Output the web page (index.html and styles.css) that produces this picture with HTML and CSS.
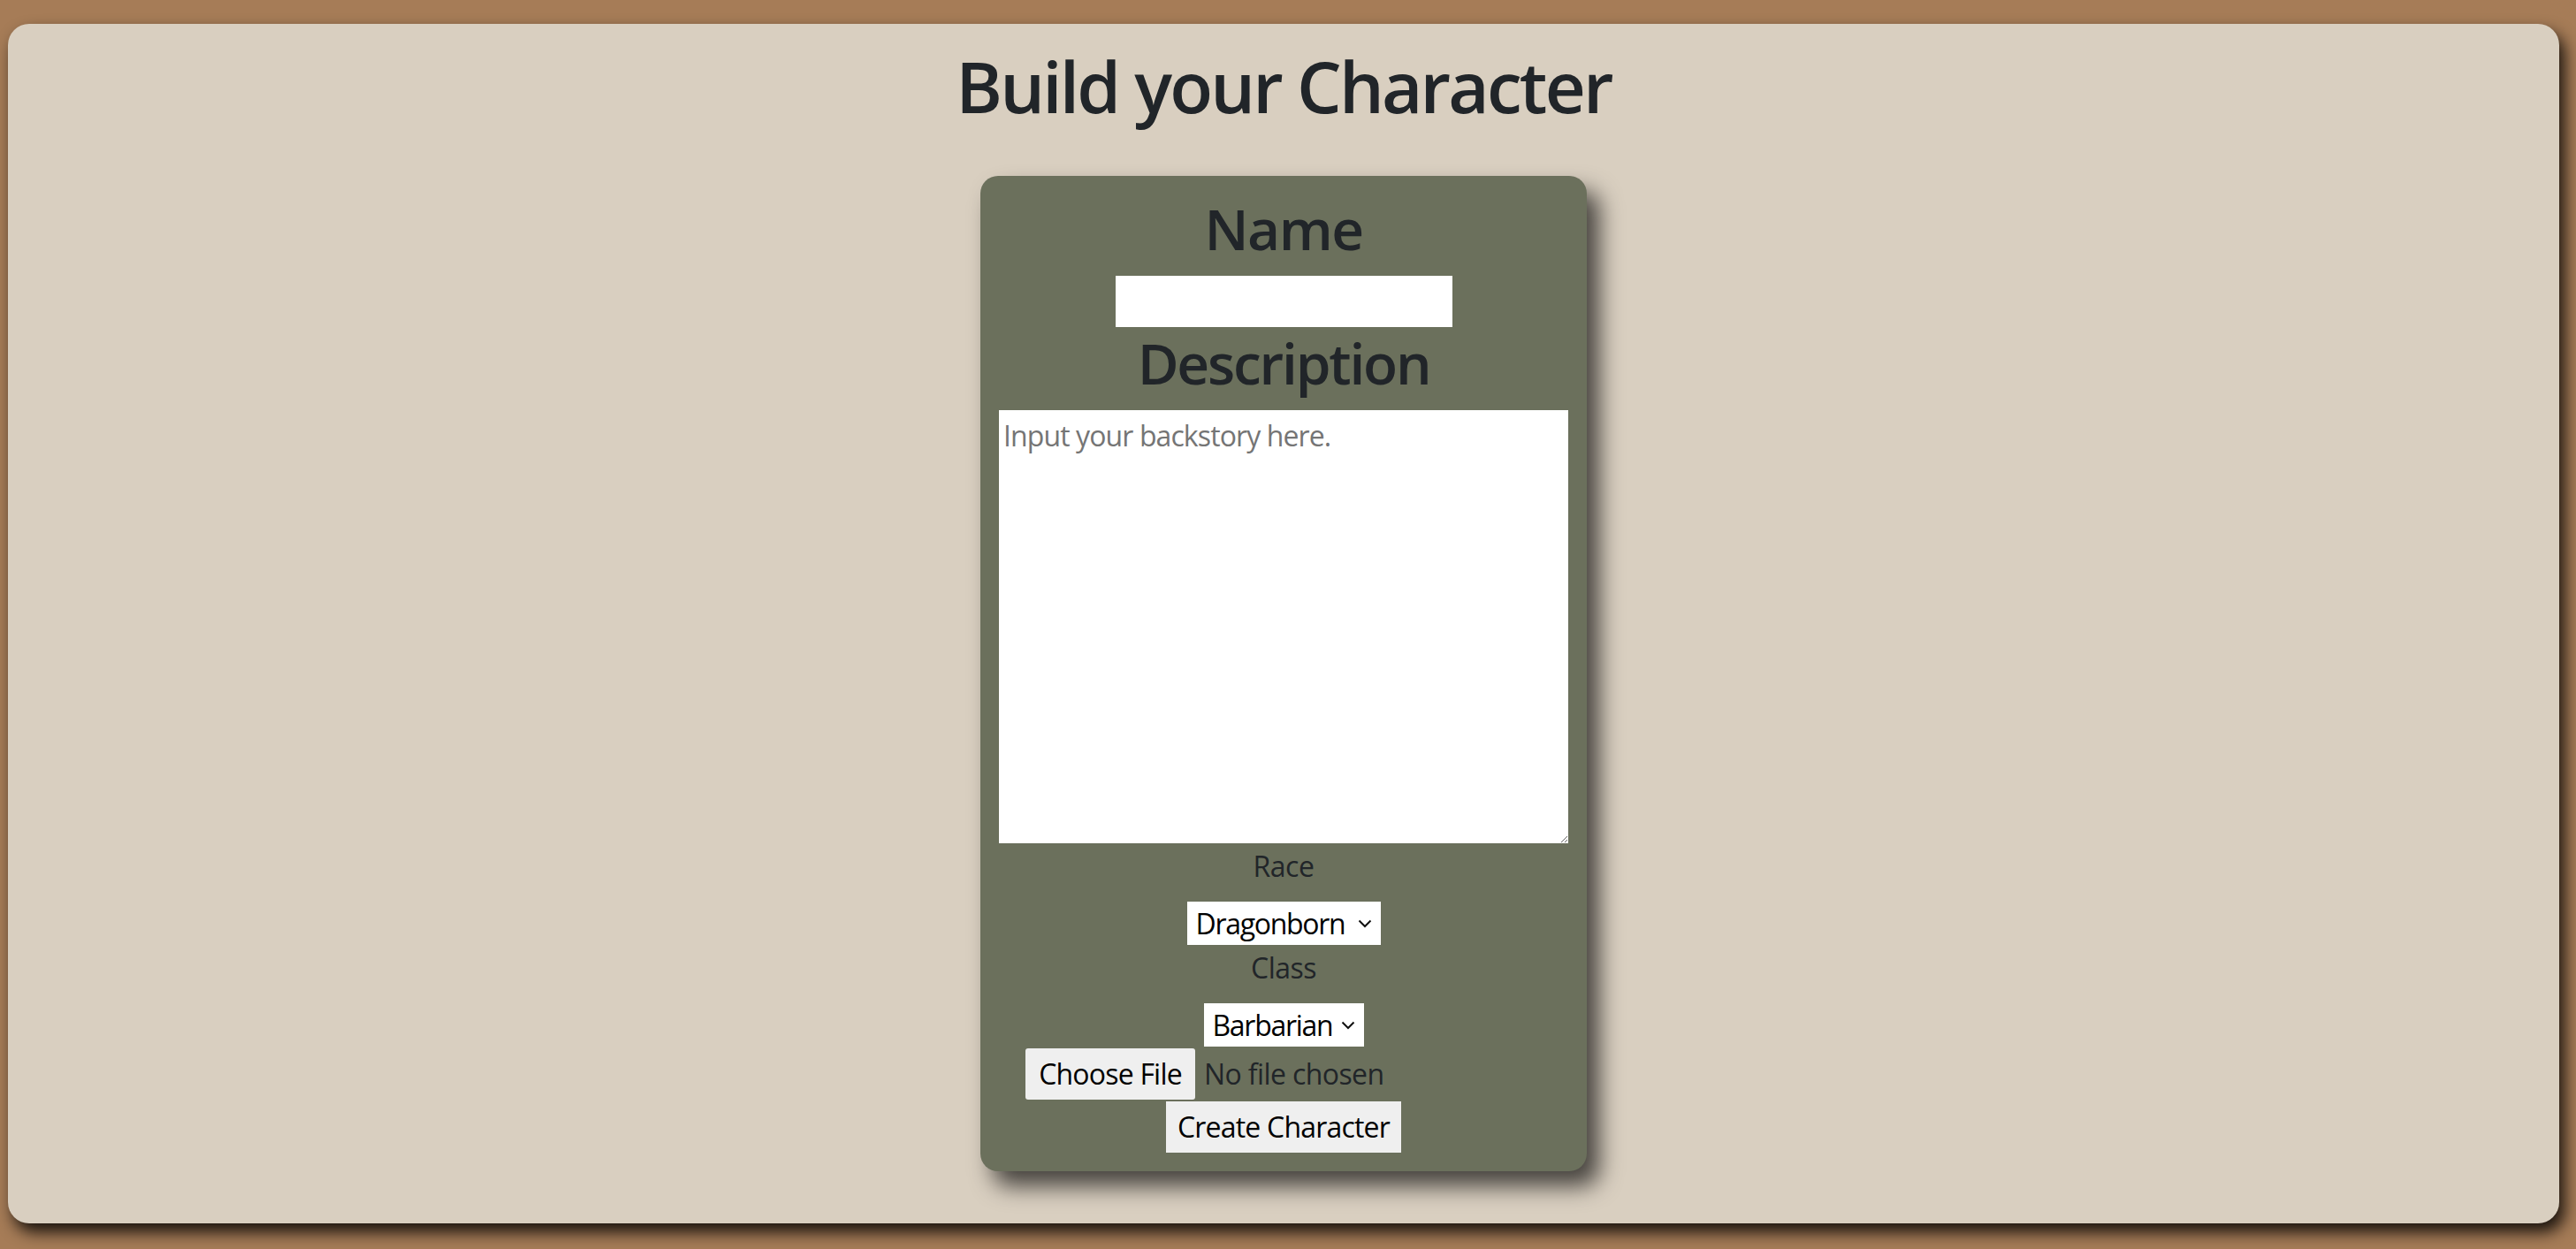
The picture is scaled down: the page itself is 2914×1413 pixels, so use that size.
FILE: index.html
```html
<!DOCTYPE html>
<html lang="en">
<head>
<meta charset="utf-8">
<title>Build your Character</title>
<link rel="stylesheet" href="styles.css">
</head>
<body>
  <main class="page">
    <h1 class="title">Build your Character</h1>
    <form class="card">
      <h2 class="field-title">Name</h2>
      <input class="name-input" type="text">
      <h2 class="field-title desc-title">Description</h2>
      <textarea class="backstory" placeholder="Input your backstory here."></textarea>
      <label class="small-label">Race</label>
      <span class="select-wrap race">
        <select class="pick"><option>Dragonborn</option></select>
        <svg class="chev" viewBox="0 0 16 10" width="16" height="10"><path d="M1.5 1.5 L8 8 L14.5 1.5" fill="none" stroke="#111" stroke-width="2"/></svg>
      </span>
      <label class="small-label">Class</label>
      <span class="select-wrap klass">
        <select class="pick"><option>Barbarian</option></select>
        <svg class="chev" viewBox="0 0 16 10" width="16" height="10"><path d="M1.5 1.5 L8 8 L14.5 1.5" fill="none" stroke="#111" stroke-width="2"/></svg>
      </span>
      <div class="file-row">
        <button type="button" class="btn choose">Choose File</button>
        <span class="file-text">No file chosen</span>
      </div>
      <button type="button" class="btn create">Create Character</button>
    </form>
  </main>
</body>
</html>
```

FILE: styles.css
```css
html, body {
  margin: 0;
  padding: 0;
}

body {
  background: #a67c57;
  font-family: "Open Sans", "Noto Sans", sans-serif;
  color: #212529;
  overflow: hidden;
}

.page {
  margin: 27px 19px 29px 9px;
  height: 1357px;
  box-sizing: border-box;
  padding-top: 22px;
  background: #d9cfc0;
  border-radius: 24px;
  box-shadow: 6px 10px 18px rgba(0, 0, 0, 0.85);
  display: flex;
  flex-direction: column;
  align-items: center;
}

.title {
  margin: 0 0 54px;
  font-size: 80px;
  line-height: 96px;
  font-weight: 600;
  letter-spacing: -2.8px;
  color: #212529;
}

.card {
  width: 686px;
  box-sizing: border-box;
  padding: 21px 21px 21px;
  background: #6b705c;
  border-radius: 20px;
  box-shadow: 14px 17px 26px rgba(0, 0, 0, 0.68);
  display: flex;
  flex-direction: column;
  align-items: center;
}

.field-title {
  margin: 0;
  font-size: 64px;
  line-height: 77px;
  font-weight: 600;
  letter-spacing: -1.5px;
  color: #212529;
}

.desc-title {
  margin-top: 2px;
  letter-spacing: -2.2px;
}

.name-input {
  margin-top: 15px;
  width: 381px;
  height: 58px;
  box-sizing: border-box;
  border: none;
  background: #fff;
  padding: 0 6px;
  font-family: inherit;
  font-size: 32px;
  outline: none;
}

.backstory {
  margin-top: 15px;
  width: 644px;
  height: 490px;
  box-sizing: border-box;
  border: none;
  background: #fff;
  padding: 7px 5px;
  font-family: inherit;
  font-size: 32px;
  letter-spacing: -0.9px;
  color: #212529;
  outline: none;
  resize: both;
  display: block;
}

.backstory::placeholder {
  color: #757575;
}

.small-label {
  margin-top: 2px;
  font-size: 32px;
  line-height: 48px;
  letter-spacing: -0.5px;
  color: #212529;
}

.select-wrap {
  margin-top: 16px;
  position: relative;
  display: flex;
  height: 49px;
}

.select-wrap.race {
  width: 219px;
}

.select-wrap.klass {
  width: 181px;
}

.pick {
  -webkit-appearance: none;
  appearance: none;
  width: 100%;
  height: 49px;
  box-sizing: border-box;
  border: none;
  border-radius: 0;
  background: #fff;
  padding: 0 30px 0 10px;
  font-family: inherit;
  font-size: 32px;
  letter-spacing: -1.3px;
  color: #000;
  outline: none;
}

.chev {
  position: absolute;
  right: 10px;
  top: 20px;
  pointer-events: none;
}

.file-row {
  margin-top: 2px;
  width: 584px;
  display: flex;
  align-items: center;
  gap: 10px;
}

.file-text {
  font-size: 32px;
  line-height: 44px;
  color: #212529;
  letter-spacing: -0.6px;
}

.btn {
  height: 58px;
  box-sizing: border-box;
  border: none;
  border-radius: 3px;
  background: #efefef;
  padding: 7px 16px;
  font-family: inherit;
  font-size: 32px;
  line-height: 44px;
  letter-spacing: -0.8px;
  color: #000;
}

.choose {
  width: 192px;
  padding: 7px 0;
  text-align: center;
}

.create {
  margin-top: 2px;
  width: 266px;
  padding: 7px 0;
  text-align: center;
  border-radius: 0;
}
```
